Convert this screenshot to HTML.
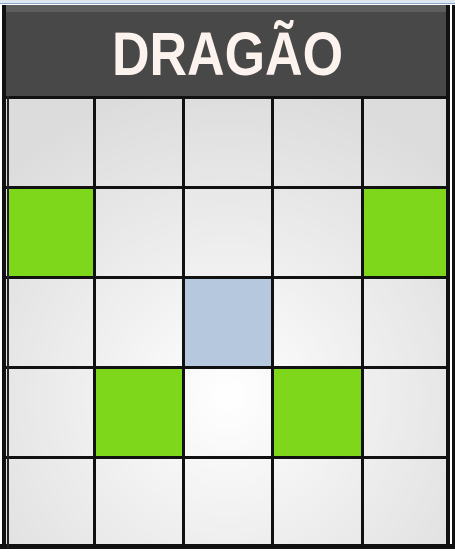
<!DOCTYPE html>
<html><head><style>
html,body{margin:0;padding:0;width:455px;height:552px;background:#fff;overflow:hidden;position:relative;font-family:"Liberation Sans",sans-serif}
div{position:absolute;box-sizing:border-box}
.v{background:#111;width:3px;top:96px;height:452px}
.h{background:#111;height:3px;left:6px;width:443px}
.g{background:#7ed71b}
</style></head><body>
<div style="left:0;top:0;width:455px;height:4px;background:#dfe6ef;border-bottom:1px solid #8aa6c8"></div>
<div style="left:6px;top:5px;width:443px;height:93px;background:#484848"></div>
<div style="left:6px;top:5px;width:443px;height:7px;background:#5e5e5e"></div>
<div style="left:6px;top:23px;width:443px;height:64px;color:#fdf3ee;font-size:52px;font-weight:bold;text-align:center;line-height:64px;transform:scaleY(1.18);font-family:'Liberation Sans',sans-serif">DRAGÃO</div>
<div style="left:6px;top:98px;width:443px;height:448px;background:radial-gradient(circle at 50% 67%,#ffffff 0%,#f0f0f0 35%,#dcdcdc 85%)"></div>
<div class="g" style="left:7px;top:188px;width:87px;height:88px"></div>
<div class="g" style="left:364px;top:188px;width:84px;height:88px"></div>
<div style="left:185px;top:278px;width:87px;height:88px;background:#b5c8de"></div>
<div class="g" style="left:96px;top:368px;width:87px;height:88px"></div>
<div class="g" style="left:274px;top:368px;width:87px;height:88px"></div>
<div class="h" style="top:96px"></div>
<div class="h" style="top:186px"></div>
<div class="h" style="top:276px"></div>
<div class="h" style="top:366px"></div>
<div class="h" style="top:456px"></div>
<div style="left:0;top:544px;width:455px;height:5px;background:#111"></div>
<div class="v" style="left:93px"></div>
<div class="v" style="left:182px"></div>
<div class="v" style="left:271px"></div>
<div class="v" style="left:361px"></div>
<div style="left:2px;top:5px;width:4px;height:544px;background:#111"></div>
<div style="left:7px;top:96px;width:2px;height:452px;background:#222"></div>
<div style="left:446px;top:5px;width:4px;height:544px;background:#111"></div>
<div style="left:452px;top:5px;width:3px;height:544px;background:#111"></div>
</body></html>
